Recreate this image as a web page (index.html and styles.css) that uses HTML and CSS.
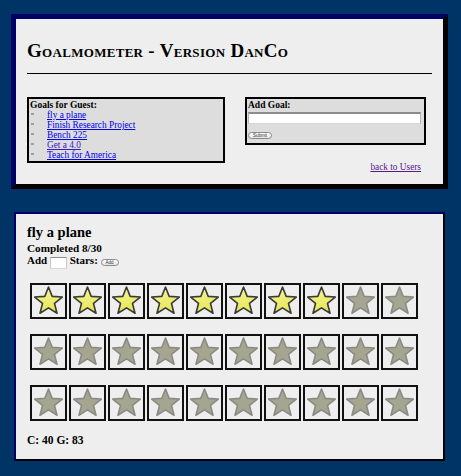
FILE: index.html
```html
<!DOCTYPE html>
<html>
<head>
<meta charset="utf-8">
<title>Goalmometer</title>
<link rel="stylesheet" href="styles.css">
</head>
<body>
<svg class="defs" width="0" height="0" aria-hidden="true">
  <defs>
    <linearGradient id="gy" x1="0" y1="0" x2="0.3" y2="1">
      <stop offset="0" stop-color="#f7f79a"/>
      <stop offset="1" stop-color="#e6e65a"/>
    </linearGradient>
    <symbol id="star-on" viewBox="0 0 33 32">
      <path d="M16.5 2 L20.2 11.4 L30.29 12.02 L22.49 18.45 L25.02 28.23 L16.5 22.8 L7.98 28.23 L10.51 18.45 L2.71 12.02 L12.8 11.4 Z" fill="url(#gy)" stroke="#3a3a36" stroke-width="1.6" stroke-linejoin="round"/>
    </symbol>
    <symbol id="star-off" viewBox="0 0 33 32">
      <path d="M16.5 2 L20.2 11.4 L30.29 12.02 L22.49 18.45 L25.02 28.23 L16.5 22.8 L7.98 28.23 L10.51 18.45 L2.71 12.02 L12.8 11.4 Z" fill="#a6a590" stroke="#8b8b85" stroke-width="1.6" stroke-linejoin="round"/>
    </symbol>
  </defs>
</svg>

<div class="panel panel-top">
  <h1 class="title">Goalmometer - Version DanCo</h1>
  <hr class="rule">
  <div class="boxes">
    <div class="box goals">
      <div class="box-head">Goals for Guest:</div>
      <ul class="goal-list">
        <li><a href="#">fly a plane</a></li>
        <li><a href="#">Finish Research Project</a></li>
        <li><a href="#">Bench 225</a></li>
        <li><a href="#" class="visited-ish">Get a 4.0</a></li>
        <li><a href="#">Teach for America</a></li>
      </ul>
    </div>
    <div class="box addgoal">
      <div class="box-head">Add Goal:</div>
      <input class="goal-input" type="text">
      <div class="btn-row"><button class="btn btn-submit">Submit</button></div>
    </div>
  </div>
  <div class="back"><a href="#" class="visited">back to Users</a></div>
</div>

<div class="panel panel-goal">
  <div class="goal-name">fly a plane</div>
  <div class="goal-status">Completed 8/30</div>
  <div class="goal-add">Add <input class="stars-input" type="text"> Stars: <button class="btn btn-add">Add</button></div>

  <div class="star-row">
    <div class="star-box"><svg class="star"><use href="#star-on"/></svg></div>
    <div class="star-box"><svg class="star"><use href="#star-on"/></svg></div>
    <div class="star-box"><svg class="star"><use href="#star-on"/></svg></div>
    <div class="star-box"><svg class="star"><use href="#star-on"/></svg></div>
    <div class="star-box"><svg class="star"><use href="#star-on"/></svg></div>
    <div class="star-box"><svg class="star"><use href="#star-on"/></svg></div>
    <div class="star-box"><svg class="star"><use href="#star-on"/></svg></div>
    <div class="star-box"><svg class="star"><use href="#star-on"/></svg></div>
    <div class="star-box"><svg class="star"><use href="#star-off"/></svg></div>
    <div class="star-box"><svg class="star"><use href="#star-off"/></svg></div>
  </div>
  <div class="star-row">
    <div class="star-box"><svg class="star"><use href="#star-off"/></svg></div>
    <div class="star-box"><svg class="star"><use href="#star-off"/></svg></div>
    <div class="star-box"><svg class="star"><use href="#star-off"/></svg></div>
    <div class="star-box"><svg class="star"><use href="#star-off"/></svg></div>
    <div class="star-box"><svg class="star"><use href="#star-off"/></svg></div>
    <div class="star-box"><svg class="star"><use href="#star-off"/></svg></div>
    <div class="star-box"><svg class="star"><use href="#star-off"/></svg></div>
    <div class="star-box"><svg class="star"><use href="#star-off"/></svg></div>
    <div class="star-box"><svg class="star"><use href="#star-off"/></svg></div>
    <div class="star-box"><svg class="star"><use href="#star-off"/></svg></div>
  </div>
  <div class="star-row">
    <div class="star-box"><svg class="star"><use href="#star-off"/></svg></div>
    <div class="star-box"><svg class="star"><use href="#star-off"/></svg></div>
    <div class="star-box"><svg class="star"><use href="#star-off"/></svg></div>
    <div class="star-box"><svg class="star"><use href="#star-off"/></svg></div>
    <div class="star-box"><svg class="star"><use href="#star-off"/></svg></div>
    <div class="star-box"><svg class="star"><use href="#star-off"/></svg></div>
    <div class="star-box"><svg class="star"><use href="#star-off"/></svg></div>
    <div class="star-box"><svg class="star"><use href="#star-off"/></svg></div>
    <div class="star-box"><svg class="star"><use href="#star-off"/></svg></div>
    <div class="star-box"><svg class="star"><use href="#star-off"/></svg></div>
  </div>

  <div class="totals">C: 40 G: 83</div>
</div>
</body>
</html>
```

FILE: styles.css
```css
html, body {
  margin: 0;
  padding: 0;
  background: #003366;
}
body {
  font-family: "Liberation Serif", "Times New Roman", serif;
  color: #000;
  overflow: hidden;
}
.defs {
  display: block;
  width: 0;
  height: 0;
  overflow: hidden;
}
a {
  color: #0000ee;
  text-decoration: underline;
}
a.visited {
  color: #551a8b;
}
a.visited-ish {
  color: #3a18c8;
}

.panel {
  background: #eeeeee;
  border-style: solid;
  border-color: #000066 #000000 #000000 #000066;
}
.panel-top {
  margin: 14px 13px 0 11px;
  border-width: 5px;
  padding: 0 11px 12px 11px;
}
.title {
  margin: 22px 0 0 0;
  font-size: 19px;
  line-height: 20px;
  font-weight: bold;
  font-variant: small-caps;
  letter-spacing: 0.3px;
}
.rule {
  margin: 12px 0 0 0;
  border: 0;
  border-top: 1px solid #000;
  height: 0;
}
.boxes {
  display: flex;
  align-items: flex-start;
  gap: 20px;
  margin-top: 23px;
}
.box {
  background: #dddddd;
  border: 2px solid #000;
  padding: 1px 1px 1px 1px;
  font-size: 9.5px;
  line-height: 10px;
}
.goals {
  width: 192px;
}
.addgoal {
  width: 175px;
  padding-bottom: 4px;
}
.box-head {
  font-weight: bold;
}
.goal-list {
  list-style: none;
  margin: 0;
  padding: 0;
  font-size: 9.3px;
}
.goal-list li::before {
  content: "";
  display: inline-block;
  width: 3px;
  height: 2px;
  background: #a0a0a0;
  margin: 0 13px 0 1px;
  vertical-align: 3px;
}
.goal-input {
  display: block;
  box-sizing: border-box;
  width: 173px;
  height: 12px;
  margin: 2px 0 0 0;
  padding: 0;
  background: #fff;
  border-style: solid;
  border-width: 2px 1px 1px 1px;
  border-color: #8c8c8c #b5b5b5 #d5d5d5 #b5b5b5;
}
.btn-row {
  margin-top: 8px;
  height: 7px;
  line-height: 7px;
}
.btn {
  display: inline-block;
  box-sizing: border-box;
  padding: 0;
  margin: 0;
  border: 1px solid #8a8a8a;
  border-radius: 4px;
  background: linear-gradient(#ffffff, #e4e4e4);
  font-family: "Liberation Sans", Arial, sans-serif;
  font-size: 4.5px;
  color: #333;
  text-align: center;
}
.btn-submit {
  width: 24px;
  height: 7px;
  line-height: 5px;
  vertical-align: top;
}
.back {
  margin-top: -1px;
  text-align: right;
  padding-right: 11px;
  font-size: 9.3px;
  line-height: 10px;
}

.panel-goal {
  margin: 23px 16px 0 14px;
  border-width: 2px;
  padding: 10px 11px 12px 11px;
}
.goal-name {
  font-size: 14.5px;
  line-height: 16px;
  font-weight: bold;
}
.goal-status {
  margin-top: 2px;
  font-size: 11.2px;
  line-height: 12px;
  font-weight: bold;
}
.goal-add {
  font-size: 11px;
  line-height: 13px;
  font-weight: bold;
}
.stars-input {
  box-sizing: border-box;
  width: 17px;
  height: 12px;
  padding: 0;
  margin: 0;
  background: #fff;
  border-style: solid;
  border-width: 1px;
  border-color: #8c8c8c #c8c8c8 #d8d8d8 #c8c8c8;
  vertical-align: -3px;
}
.btn-add {
  width: 18px;
  height: 7px;
  line-height: 5px;
  vertical-align: 0;
  font-weight: normal;
}
.star-row {
  display: flex;
  gap: 2px;
  margin: 15px 0 0 3px;
}
.goal-add + .star-row {
  margin-top: 14px;
}
.star-box {
  box-sizing: border-box;
  width: 37px;
  height: 36px;
  border: 2px solid #111;
  display: flex;
  align-items: flex-start;
  justify-content: center;
}
.star {
  width: 33px;
  height: 32px;
  display: block;
}
.totals {
  margin-top: 13px;
  font-size: 11.5px;
  line-height: 13px;
  font-weight: bold;
}
```
